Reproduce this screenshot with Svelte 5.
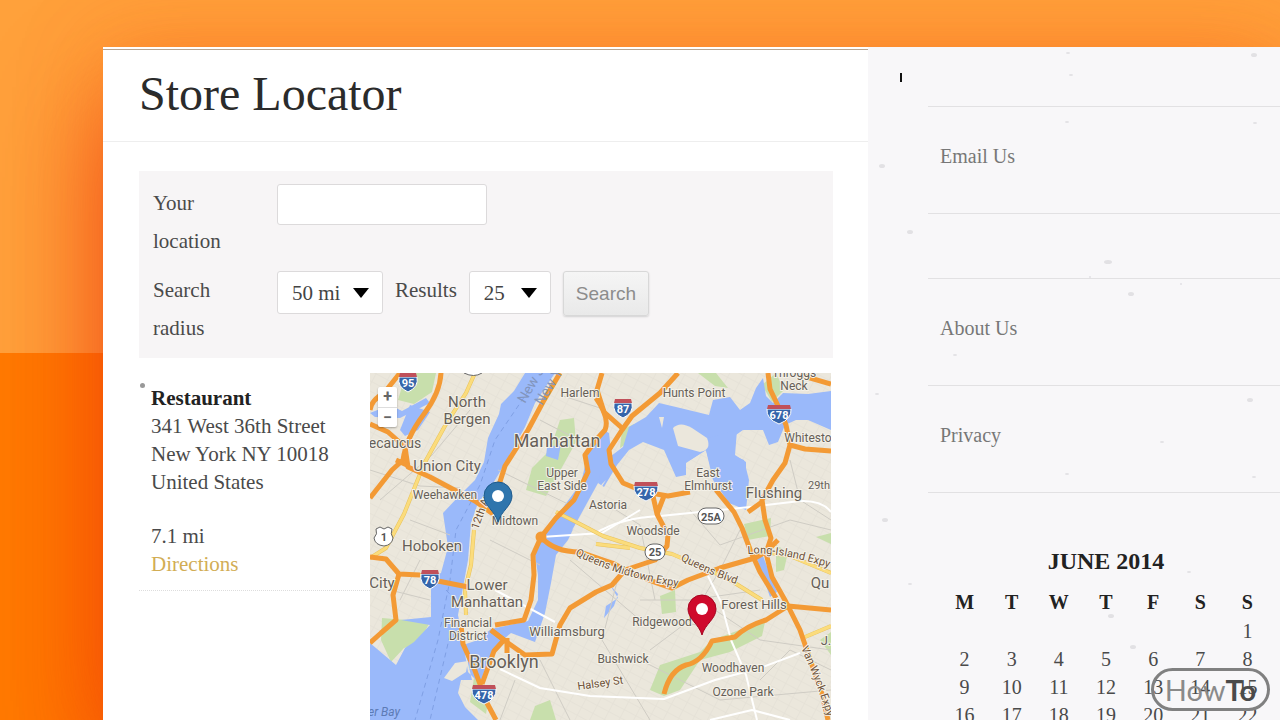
<script>
  let location = "";
  let radius = "50 mi";
  let results = "25";

  const radii = ["10 mi", "25 mi", "50 mi", "100 mi"];
  const counts = ["25", "50", "75"];

  const links = ["", "Email Us", "", "About Us", "Privacy"];

  const days = ["M", "T", "W", "T", "F", "S", "S"];
  const weeks = [
    ["", "", "", "", "", "", 1],
    [2, 3, 4, 5, 6, 7, 8],
    [9, 10, 11, 12, 13, 14, 15],
    [16, 17, 18, 19, 20, 21, 22],
    [23, 24, 25, 26, 27, 28, 29]
  ];

  // paper flecks of the sidebar: x, y, size
  const specks = [
    [200, 6, 2], [203, 28, 2], [199, 75, 2], [42, 185, 3], [240, 215, 4],
    [263, 247, 3], [14, 119, 3], [9, 347, 2], [382, 353, 3], [294, 395, 2],
    [199, 427, 2], [386, 430, 2], [243, 569, 3], [265, 600, 3], [321, 525, 2],
    [17, 473, 3], [42, 537, 2], [222, 230, 1], [87, 308, 2], [386, 8, 3],
    [387, 76, 2], [313, 237, 1]
  ];

  const highways = [
    "M370 410C372 398 382 396 388 388L400 373",
    "M441 373Q440 393 424 414Q406 438 403 460L392 470L370 498",
    "M370 424L388 432L405 447L408 467L430 477L475 501L493 514",
    "M396 460L409 466",
    "M560 373L543 402L528 430L505 466L498 488",
    "M622 428L604 412L597 390L602 373",
    "M596 398Q610 418 605 430L596 440L585 455L588 472L574 500L556 518L541 537L533 555L534 575L531 600L524 620L495 625",
    "M678 373L660 393L632 416L622 430L609 450L611 464L623 483L645 492L668 496L690 492",
    "M716 490L734 512L742 528L751 552L760 572L776 598",
    "M664 496L657 514L653 496",
    "M657 514L668 535L667 546L655 560L625 570L612 585L596 592L570 608L560 625L552 654L525 655L508 643L491 630",
    "M541 537Q554 552 580 552L612 563Q640 578 672 588L688 580L720 568L755 558L767 551L778 540",
    "M768 373L770 389L779 408L786 425L790 445L785 463L773 480L762 500L765 520L771 538L766 553L772 577L786 602L800 630L812 665L822 694L828 720",
    "M790 445L805 449L831 451",
    "M831 384L800 375",
    "M762 502L748 512",
    "M664 694Q670 670 686 665Q702 662 712 641L735 637Q746 626 766 620L788 606L831 610",
    "M370 557L386 559L399 574L420 575",
    "M399 574L393 595L396 620L381 633L370 643",
    "M438 581L468 587",
    "M461 625L463 644L474 668L487 703L496 720",
    "M491 630L504 640L494 651L482 684",
    "M507 638L507 653"
  ];

  const mainRoads = [
    "M475 373L466 393L446 424L424 464L404 514L386 548L370 558",
    "M474 530L471 565L465 590L466 615",
    "M556 512L580 524L603 536L640 548L672 554L700 566L730 580L762 600",
    "M596 544L630 548",
    "M805 637L831 626",
    "M415 575L430 575",
    "M765 552L790 556L831 573"
  ];

  const whiteRoads = [
    "M708 576L721 602L731 640L746 675L757 720",
    "M500 669L540 688L590 696L664 699L715 680L760 668L800 653",
    "M596 533Q620 518 660 516L750 507L800 501Q822 500 831 512",
    "M710 720L752 710L790 720",
    "M495 590L555 622",
    "M541 537L602 533L640 510"
  ];

  const streets = [
    "M380 500L432 455L470 410", "M410 520L450 535", "M370 470L420 486L460 488",
    "M490 540L540 565M498 470L570 505", "M540 420L590 446M560 395L600 408",
    "M600 500L640 525L655 600", "M570 560L640 620L700 625",
    "M620 570L602 640L650 720", "M540 660L570 720M515 680L500 720",
    "M640 660L720 700L831 690", "M690 510L720 545L790 520L831 530",
    "M700 600L760 640L831 650", "M740 530L720 570L690 620L650 650",
    "M790 460L800 500L831 520", "M640 600L690 600L760 590",
    "M760 680L790 650L831 670", "M390 590L430 600M400 600L420 560"
  ];

  const parks = [
    "M560 420L574 418L576 442L546 496L526 490L532 468L550 450Z",
    "M382 618L430 622L418 644L404 648L391 662L381 640Z",
    "M650 690L660 665L700 652L712 640L745 628L765 622L762 636L730 652L700 660L680 690L664 696Z",
    "M406 373L436 373L432 392L414 404L398 400Z",
    "M744 524L771 518L770 536L748 540Z",
    "M660 596L675 590L676 612L662 614Z",
    "M535 706L550 700L556 720L530 720Z",
    "M776 545L788 552L784 570L776 572Z",
    "M762 385L776 373L784 390L772 402Z",
    "M622 430L634 424L632 440L620 448Z",
    "M816 537L831 533L831 544Z",
    "M698 373L716 373L728 388L715 386Z",
    "M820 640L831 632L831 655Z",
    "M474 678L490 690L486 714L470 702Z"
  ];

  const labels = [
    { x: 467, y: 407, size: 15, lines: ["North", "Bergen"] },
    { x: 580, y: 397, size: 12, lines: ["Harlem"] },
    { x: 694, y: 397, size: 12, lines: ["Hunts Point"] },
    { x: 794, y: 377, size: 12, lines: ["Throggs", "Neck"] },
    { x: 557, y: 447, size: 18, lines: ["Manhattan"] },
    { x: 395, y: 448, size: 14, lines: ["ecaucus"] },
    { x: 447, y: 471, size: 15, lines: ["Union City"] },
    { x: 562, y: 477, size: 12, lines: ["Upper", "East Side"] },
    { x: 708, y: 477, size: 12, lines: ["East", "Elmhurst"] },
    { x: 774, y: 498, size: 15, lines: ["Flushing"] },
    { x: 808, y: 442, size: 12, lines: ["Whitesto"] },
    { x: 819, y: 489, size: 11, lines: ["29th"] },
    { x: 445, y: 499, size: 12, lines: ["Weehawken"] },
    { x: 515, y: 525, size: 12, lines: ["Midtown"] },
    { x: 608, y: 509, size: 12, lines: ["Astoria"] },
    { x: 653, y: 535, size: 12, lines: ["Woodside"] },
    { x: 432, y: 551, size: 15, lines: ["Hoboken"] },
    { x: 382, y: 588, size: 15, lines: ["City"] },
    { x: 487, y: 590, size: 15, lines: ["Lower", "Manhattan"] },
    { x: 468, y: 627, size: 12, lines: ["Financial", "District"] },
    { x: 567, y: 636, size: 13, lines: ["Williamsburg"] },
    { x: 504, y: 668, size: 18, lines: ["Brooklyn"] },
    { x: 662, y: 626, size: 12, lines: ["Ridgewood"] },
    { x: 754, y: 609, size: 13, lines: ["Forest Hills"] },
    { x: 623, y: 663, size: 12, lines: ["Bushwick"] },
    { x: 733, y: 672, size: 12, lines: ["Woodhaven"] },
    { x: 743, y: 696, size: 12, lines: ["Ozone Park"] },
    { x: 820, y: 588, size: 15, lines: ["Qu"] },
    { x: 826, y: 645, size: 13, lines: ["J."] }
  ];

  const interstates = [
    { x: 408, y: 382, n: "95" },
    { x: 623, y: 408, n: "87" },
    { x: 779, y: 414, n: "678" },
    { x: 646, y: 491, n: "278" },
    { x: 430, y: 579, n: "78" },
    { x: 484, y: 694, n: "478" }
  ];

  const pins = [
    { x: 498, y: 522, fill: "#2f75ad", edge: "#1d5a8e" },
    { x: 702, y: 635, fill: "#cf0a2c", edge: "#a50420" }
  ];
</script>

<div class="backdrop">
  <div class="page">
    <main>
      <h1>Store Locator</h1>

      <div class="content">
        <form on:submit|preventDefault>
          <label for="location"><span>Your location</span></label>
          <div class="fields">
            <input id="location" type="text" bind:value={location} />
          </div>

          <label for="radius"><span>Search radius</span></label>
          <div class="fields">
            <div class="select">
              <select id="radius" bind:value={radius}>
                {#each radii as r}
                  <option>{r}</option>
                {/each}
              </select>
            </div>
            <label for="results">Results</label>
            <div class="select small">
              <select id="results" bind:value={results}>
                {#each counts as c}
                  <option>{c}</option>
                {/each}
              </select>
            </div>
            <button type="submit">Search</button>
          </div>
        </form>

        <div class="results">
          <ul class="stores">
            <li>
              <p>
                <strong>Restaurant</strong><br />
                341 West 36th Street<br />
                New York NY 10018<br />
                United States
              </p>
              <p>7.1 mi<br /><a href="#directions">Directions</a></p>
            </li>
          </ul>

          <div class="map">
            <svg viewBox="370 373 461 347" role="img" aria-label="Map of stores">
              <defs>
                <pattern id="grid" width="13" height="9" patternUnits="userSpaceOnUse" patternTransform="rotate(28)">
                  <path d="M0 0H13M0 0V9" fill="none" stroke="#e2ded4" />
                </pattern>
                <path id="midtown" d="M575 555Q625 580 688 588" />
                <path id="qblvd" d="M680 560Q710 575 736 584" />
                <path id="liexpy" d="M748 554Q780 551 833 569" />
                <path id="vanwyck" d="M801 648Q818 685 829 722" />
              </defs>

              <rect class="land" x="370" y="373" width="461" height="347" />
              <rect x="370" y="373" width="461" height="347" fill="url(#grid)" />

              {#each parks as d}
                <path class="park" {d} />
              {/each}

              <g class="water">
                <path d="M525 373L514 391L501 404L499 414L488 438L484 462L475 480L458 497L443 513L448 547L441 573L431 577L431 617L401 620L430 625L414 642L405 648L396 665L370 643V720H478L465 707L458 693L461 680L472 680L466 655L463 645L478 640L491 629L528 621L538 600L538 575L535 555L541 535L556 517L581 483L588 453L603 430L609 433L612 460L598 483L575 525L568 540L556 555L551 583L545 613L535 642L511 633L497 645L487 663L480 684L468 672L462 635L458 615L468 560L471 523L478 503L491 487L501 470L525 427L535 403L555 373Z" />
                <path d="M603 462L623 447L629 427L646 417L659 403L676 407L709 415L713 400L730 397L740 410L750 403L756 388L763 378L766 396L773 403L783 393L808 394L831 391V430L808 420L796 420L785 425L778 442L769 445L763 430H743L733 437L731 455L744 460L749 480L746 510L729 503L713 480L706 450L686 463L686 475L676 477L664 450L643 442L629 450L617 465L604 487L598 483Z" />
                <path d="M684 428L708 438L737 430L735 455L746 462V500L728 500L714 480L706 450L690 460Z" />
                <path d="M370 413L390 405L402 411L426 398L430 403L400 418L375 417Z" />
                <path d="M410 405L430 412L418 430L405 436L400 430Z" />
                <path d="M547 448L561 444L558 460L546 456Z" />
                <path d="M757 559L763 556L777 592L770 597Z" />
                <path d="M610 585L618 594L614 606L604 618L606 606L618 598Z" />
              </g>
              <g class="land">
                <path d="M673 428Q680 421 692 428L707 438Q712 450 700 452L678 446Z" />
                <path d="M659 417H664L662 428Z" />
                <path d="M444 678L455 663L468 661L466 672L452 681Z" />
                <path d="M602 484L606 480L578 525L572 530Z" />
              </g>
              <path class="ferry" d="M529 390L495 440L480 485L456 530L450 580L438 640L415 720M450 635L430 720M446 590L470 615" />

              {#each streets as d}
                <path class="street" {d} />
              {/each}
              {#each whiteRoads as d}
                <path class="white" {d} />
              {/each}
              {#each mainRoads as d}
                <path class="main-edge" {d} />
                <path class="main-road" {d} />
              {/each}
              {#each highways as d}
                <path class="highway" {d} />
              {/each}
              <circle class="highway" cx="541" cy="537" r="3" />

              <g class="road-name">
                <text><textPath href="#midtown">Queens Midtown Expy</textPath></text>
                <text><textPath href="#qblvd">Queens Blvd</textPath></text>
                <text><textPath href="#liexpy">Long-Island Expy</textPath></text>
                <text><textPath href="#vanwyck">Van Wyck Expy</textPath></text>
                <text transform="translate(478 530) rotate(-70)">12th Ave</text>
                <text transform="translate(578 690) rotate(-8)">Halsey St</text>
              </g>
              <g class="state">
                <text transform="translate(525 404) rotate(-60)">New J</text>
                <text transform="translate(542 406) rotate(-58)">New Y</text>
              </g>
              <text class="bay" x="368" y="716">er Bay</text>

              {#each labels as l}
                <text class="place" x={l.x} y={l.y} font-size={l.size}>
                  {#each l.lines as line, i}
                    <tspan x={l.x} y={l.y + i * (l.size > 13 ? 17 : 13)}>{line}</tspan>
                  {/each}
                </text>
              {/each}

              {#each interstates as s}
                <g class="shield" transform="translate({s.x} {s.y})">
                  <path class="blue" d={s.n.length > 2 ? "M-12 -5H12Q13 5 0 10Q-13 5 -12 -5Z" : "M-9 -5H9Q11 5 0 10Q-11 5 -9 -5Z"} />
                  <path class="red" d={s.n.length > 2 ? "M-11 -9H11L12 -5H-12Z" : "M-8 -9H8L9 -5H-9Z"} />
                  <text y="5">{s.n}</text>
                </g>
              {/each}

              <g class="route">
                <rect x="698" y="508" width="26" height="16" rx="8" />
                <text x="711" y="521">25A</text>
                <rect x="645" y="544" width="20" height="16" rx="8" />
                <text x="655" y="556">25</text>
                <path d="M376 529L380 527L384 529L388 527L392 529Q390 534 393 538Q392 545 384 546Q375 545 374 538Q378 534 376 529Z" />
                <text x="384" y="541">1</text>
                <path d="M464 373Q474 378 482 373" />
              </g>

              {#each pins as p}
                <g transform="translate({p.x} {p.y})">
                  <path d="M0 0C-3 -11 -14 -16 -14 -26A14 14 0 0 1 14 -26C14 -16 3 -11 0 0Z" fill={p.fill} stroke={p.edge} />
                  <circle cy="-26" r="6" fill="#fff" />
                </g>
              {/each}
            </svg>
            <div class="zoom">
              <button type="button" aria-label="Zoom in">+</button>
              <button type="button" aria-label="Zoom out">−</button>
            </div>
          </div>
        </div>
      </div>
    </main>

    <aside>
      <svg class="specks" aria-hidden="true">
        {#each specks as [x, y, r]}
          <ellipse cx={x} cy={y} rx={r} ry={r > 2 ? 2 : 1} />
        {/each}
      </svg>
      <span class="caret"></span>

      <ul class="links">
        {#each links as link}
          <li class:empty={!link}>
            {#if link}<a href="#{link}">{link}</a>{/if}
          </li>
        {/each}
      </ul>

      <table>
        <caption>JUNE 2014</caption>
        <thead>
          <tr>
            {#each days as day}
              <th scope="col">{day}</th>
            {/each}
          </tr>
        </thead>
        <tbody>
          {#each weeks as week}
            <tr>
              {#each week as d}
                <td>{d}</td>
              {/each}
            </tr>
          {/each}
        </tbody>
      </table>
    </aside>
  </div>

  <div class="badge">How<b>To</b></div>
</div>

<style>
  :global(body) {
    margin: 0;
  }

  .backdrop {
    position: relative;
    box-sizing: border-box;
    height: 100vh;
    padding: 47px 0 0 103px;
    overflow: hidden;
    background: linear-gradient(#ffa13b 0 353px, #ff7a00 353px);
    font-family: "Liberation Serif", serif;
    font-size: 21px;
    color: #4a4a4a;
  }

  .page {
    display: flex;
    height: 100%;
    background: #fff;
    box-shadow:
      0 60px 100px rgba(237, 50, 10, 0.75),
      0 0 80px rgba(250, 90, 20, 0.25);
  }

  main {
    flex: 765;
    min-width: 0;
    margin-top: 2px;
    border-top: 1px solid #b8a48f;
  }

  h1 {
    margin: 0;
    padding: 0 36px 4px;
    border-bottom: 1px solid #eee;
    font-size: 48px;
    font-weight: normal;
    line-height: 87px;
    color: #2b2b2b;
  }

  .content {
    padding: 29px 35px 0 36px;
  }

  form {
    display: grid;
    grid-template-columns: 124px 1fr;
    row-gap: 11px;
    padding: 13px 14px 11px;
    background: #f7f5f6;
    line-height: 38px;
  }

  form > label span {
    display: block;
    width: 80px;
  }

  .fields {
    display: flex;
    align-items: flex-start;
    gap: 12px;
  }

  input,
  select {
    box-sizing: border-box;
    border: 1px solid #dcdadb;
    border-radius: 3px;
    background: #fff;
    font: inherit;
    color: #444;
  }

  input {
    width: 210px;
    height: 41px;
    padding: 0 12px;
  }

  .select {
    position: relative;
    width: 106px;
  }

  .select.small {
    width: 82px;
  }

  .select::after {
    content: "";
    position: absolute;
    top: 17px;
    right: 14px;
    border: 8px solid transparent;
    border-top: 10px solid #000;
    border-bottom: 0;
    pointer-events: none;
  }

  select {
    appearance: none;
    display: block;
    width: 100%;
    height: 43px;
    padding: 0 14px;
  }

  form button {
    height: 45px;
    padding: 0 12px;
    border: 1px solid #d8d8d8;
    border-radius: 3px;
    background: linear-gradient(#f5f5f5, #e9e9e9);
    box-shadow: 0 1px 2px rgba(0, 0, 0, 0.15);
    font: 19px "Liberation Sans", sans-serif;
    color: #8c8c8c;
  }

  .results {
    display: grid;
    grid-template-columns: 231px 1fr;
    margin-top: 15px;
    padding-right: 2px;
  }

  .stores {
    margin: 0;
    padding: 0;
    list-style: none;
  }

  .stores li {
    position: relative;
    padding: 11px 0 12px 12px;
    border-bottom: 1px dotted #ddd;
    line-height: 28px;
  }

  .stores li::before {
    content: "";
    position: absolute;
    top: 10px;
    left: 1px;
    width: 5px;
    height: 5px;
    border-radius: 50%;
    background: #999;
  }

  .stores p {
    margin: 0 0 26px;
  }

  .stores p:last-child {
    margin: 0;
  }

  .stores strong {
    color: #222;
  }

  .stores a {
    color: #d2ad55;
    text-decoration: none;
  }

  .map {
    position: relative;
  }

  .map svg {
    display: block;
    width: 100%;
    font-family: Roboto, sans-serif;
  }

  .map path {
    stroke-linejoin: round;
  }

  .land {
    fill: #ebe7dc;
  }

  .water {
    fill: #9ab9fa;
  }

  .park {
    fill: #c8dfac;
  }

  .ferry,
  .street,
  .white,
  .main-edge,
  .main-road,
  .highway {
    fill: none;
  }

  .ferry {
    stroke: #7f9fe4;
    stroke-dasharray: 5 4;
  }

  .street {
    stroke: #cfccc4;
  }

  .white {
    stroke: #fff;
    stroke-width: 2;
  }

  .main-edge {
    stroke: #e8c25c;
    stroke-width: 4;
  }

  .main-road {
    stroke: #fbdc7c;
    stroke-width: 3;
  }

  .highway {
    stroke: #f39a35;
    stroke-width: 5;
  }

  .place,
  .road-name,
  .bay {
    fill: #665f58;
    stroke: #f4f1e8;
    stroke-width: 2;
    paint-order: stroke;
  }

  .place {
    text-anchor: middle;
  }

  .road-name {
    font-size: 11px;
    fill: #6e5238;
  }

  .state {
    font-size: 14px;
    fill: #8295bd;
  }

  .bay {
    font-size: 12px;
    font-style: italic;
    fill: #5d7bb5;
    stroke: none;
  }

  .shield text,
  .route text {
    text-anchor: middle;
    font-size: 11px;
    font-weight: bold;
  }

  .shield text {
    fill: #fff;
  }

  .blue {
    fill: #3565aa;
    stroke: #fff;
  }

  .red {
    fill: #c0505a;
  }

  .route rect,
  .route path {
    fill: #fff;
    stroke: #666;
  }

  .route text {
    fill: #555;
  }

  .zoom {
    position: absolute;
    top: 14px;
    left: 8px;
    width: 19px;
    border-radius: 2px;
    background: #fff;
    box-shadow: 0 1px 2px rgba(0, 0, 0, 0.3);
  }

  .zoom button {
    display: block;
    width: 100%;
    height: 20px;
    padding: 0;
    border: 0;
    background: none;
    font: bold 16px/20px Roboto, sans-serif;
    color: #666;
  }

  .zoom button + button {
    border-top: 1px solid #ddd;
  }

  aside {
    position: relative;
    flex: 412;
    min-width: 0;
    overflow: hidden;
    background: #f8f7f9;
    font-size: 20px;
  }

  .specks {
    position: absolute;
    inset: 0;
    width: 100%;
    height: 100%;
    fill: #e2e1e4;
  }

  .caret {
    position: absolute;
    top: 26px;
    left: 32px;
    width: 2px;
    height: 9px;
    background: #111;
  }

  .links {
    position: relative;
    margin: 0 0 0 60px;
    padding: 0;
    list-style: none;
  }

  .links li {
    box-sizing: border-box;
    height: 107px;
    padding: 33px 12px;
    border-bottom: 1px solid #e2e1e3;
    line-height: 32px;
  }

  .links .empty {
    height: 65px;
    padding: 0;
  }

  .links .empty:first-child {
    height: 60px;
  }

  .links a {
    color: #777;
    text-decoration: none;
  }

  table {
    position: relative;
    width: 330px;
    margin: 52px 0 0 73px;
    border-collapse: collapse;
    table-layout: fixed;
    text-align: center;
    line-height: 28px;
  }

  caption {
    padding-bottom: 10px;
    font-size: 24px;
    font-weight: bold;
    line-height: 32px;
    color: #222;
  }

  th,
  td {
    padding: 0;
  }

  th {
    height: 30px;
    color: #222;
  }

  .badge {
    position: absolute;
    right: 10px;
    bottom: 9px;
    box-sizing: border-box;
    width: 119px;
    height: 43px;
    border: 3px solid #808080;
    border-radius: 22px;
    font: 29px/37px Lato, sans-serif;
    text-align: center;
    color: #8a8a8a;
  }

  .badge b {
    color: #4a4a4a;
  }
</style>
